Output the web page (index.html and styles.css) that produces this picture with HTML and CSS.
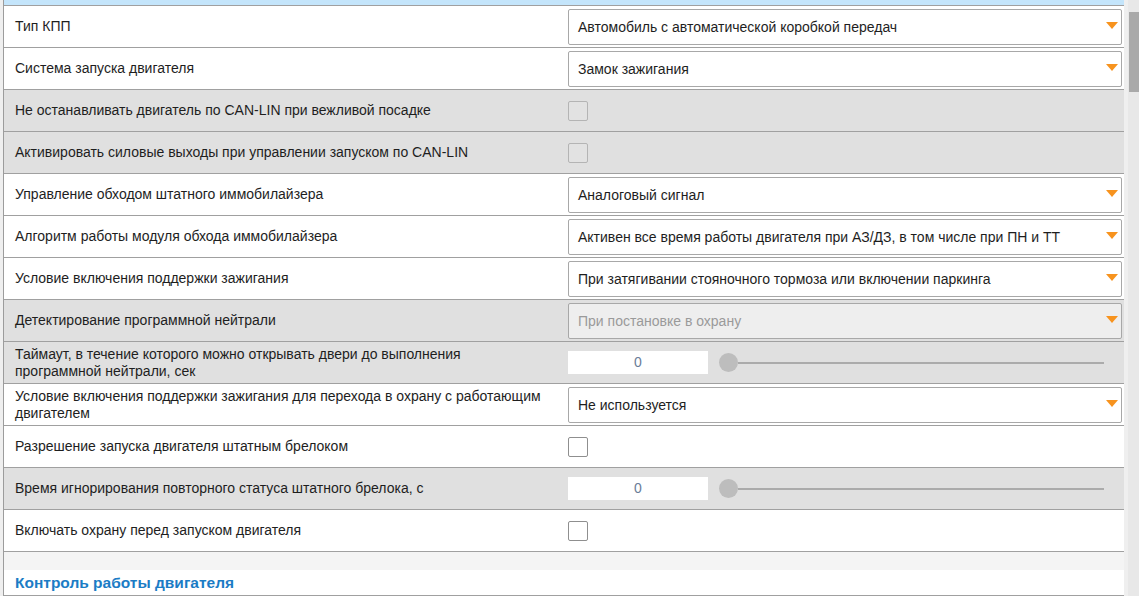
FILE: index.html
```html
<!DOCTYPE html>
<html lang="ru">
<head>
    <meta charset="UTF-8">
    <title>Настройки запуска</title>
    <link rel="stylesheet" href="styles.css">
</head>
<body>
    <div class="page">
        <div class="panel">
            <div class="topbar"></div>

            <div class="row">
                <div class="label">Тип КПП</div>
                <div class="ctrl"><div class="select"><span>Автомобиль с автоматической коробкой передач</span><i class="arrow"></i></div></div>
            </div>
            <div class="row">
                <div class="label">Система запуска двигателя</div>
                <div class="ctrl"><div class="select"><span>Замок зажигания</span><i class="arrow"></i></div></div>
            </div>
            <div class="row off">
                <div class="label">Не останавливать двигатель по CAN-LIN при вежливой посадке</div>
                <div class="ctrl"><div class="check"></div></div>
            </div>
            <div class="row off">
                <div class="label">Активировать силовые выходы при управлении запуском по CAN-LIN</div>
                <div class="ctrl"><div class="check"></div></div>
            </div>
            <div class="row">
                <div class="label">Управление обходом штатного иммобилайзера</div>
                <div class="ctrl"><div class="select"><span>Аналоговый сигнал</span><i class="arrow"></i></div></div>
            </div>
            <div class="row">
                <div class="label">Алгоритм работы модуля обхода иммобилайзера</div>
                <div class="ctrl"><div class="select"><span>Активен все время работы двигателя при АЗ/ДЗ, в том числе при ПН и ТТ</span><i class="arrow"></i></div></div>
            </div>
            <div class="row">
                <div class="label">Условие включения поддержки зажигания</div>
                <div class="ctrl"><div class="select"><span>При затягивании стояночного тормоза или включении паркинга</span><i class="arrow"></i></div></div>
            </div>
            <div class="row off">
                <div class="label">Детектирование программной нейтрали</div>
                <div class="ctrl"><div class="select disabled"><span>При постановке в охрану</span><i class="arrow"></i></div></div>
            </div>
            <div class="row off">
                <div class="label">Таймаут, в течение которого можно открывать двери до выполнения программной нейтрали, сек</div>
                <div class="ctrl">
                    <div class="num">0</div>
                    <div class="slider"><div class="thumb"></div><div class="track"></div></div>
                </div>
            </div>
            <div class="row">
                <div class="label">Условие включения поддержки зажигания для перехода в охрану с работающим двигателем</div>
                <div class="ctrl"><div class="select"><span>Не используется</span><i class="arrow"></i></div></div>
            </div>
            <div class="row">
                <div class="label">Разрешение запуска двигателя штатным брелоком</div>
                <div class="ctrl"><div class="check"></div></div>
            </div>
            <div class="row off">
                <div class="label">Время игнорирования повторного статуса штатного брелока, с</div>
                <div class="ctrl">
                    <div class="num">0</div>
                    <div class="slider"><div class="thumb"></div><div class="track"></div></div>
                </div>
            </div>
            <div class="row">
                <div class="label">Включать охрану перед запуском двигателя</div>
                <div class="ctrl"><div class="check"></div></div>
            </div>

            <div class="spacer"></div>
            <div class="section-title">Контроль работы двигателя</div>
        </div>
        <div class="scrollbar"><div class="scroll-thumb"></div></div>
    </div>
</body>
</html>
```

FILE: styles.css
```css
body {
    margin: 0;
    background: #efefef;
    font-family: "Liberation Sans", Arial, sans-serif;
    font-size: 14px;
    color: #1e1e1e;
}

.page {
    display: flex;
    height: 596px;
    overflow: hidden;
    padding-left: 3px;
}

.panel {
    width: 1121px;
    flex: none;
    box-sizing: border-box;
    border-left: 1px solid #9c9c9c;
    background: #fff;
}

.topbar {
    height: 5px;
    background: #c4e5fb;
    border-bottom: 1px solid #a0a0a0;
}

.row {
    display: grid;
    grid-template-columns: 564px 1fr;
    height: 41px;
    border-bottom: 1px solid #a0a0a0;
    background: #fff;
}

.row.off {
    background: #e0e0e0;
}

.label {
    display: flex;
    align-items: center;
    padding: 0 21px 0 11px;
    line-height: 17px;
}

.ctrl {
    display: flex;
    align-items: center;
    padding-right: 2px;
}

.select {
    flex: 1;
    height: 36px;
    box-sizing: border-box;
    display: flex;
    align-items: center;
    justify-content: space-between;
    padding: 0 3px 0 9px;
    background: #fff;
    border: 1px solid #a8a8a8;
    border-radius: 2px;
}

.select.disabled {
    background: #eeeeee;
    color: #9a9a9a;
}

.arrow {
    width: 0;
    height: 0;
    margin-top: -2px;
    border-left: 6px solid transparent;
    border-right: 6px solid transparent;
    border-top: 7px solid #f7931e;
}

.check {
    width: 20px;
    height: 20px;
    box-sizing: border-box;
    background: #fff;
    border: 1px solid #8f8f8f;
    border-radius: 2px;
}

.row.off .check {
    background: #e2e2e2;
    border-color: #b4b4b4;
}

.num {
    width: 140px;
    height: 23px;
    line-height: 23px;
    text-align: center;
    background: #fff;
    color: #6a7d98;
}

.slider {
    width: 385px;
    margin-left: 11px;
    display: flex;
    align-items: center;
}

.thumb {
    width: 19px;
    height: 19px;
    flex: none;
    border-radius: 50%;
    background: #bdbdbd;
}

.track {
    flex: 1;
    height: 2px;
    background: #ababab;
}

.spacer {
    height: 18px;
    background: #f4f4f4;
}

.section-title {
    height: 25px;
    line-height: 25px;
    padding-left: 11px;
    border-bottom: 1px solid #a0a0a0;
    font-size: 15.5px;
    font-weight: bold;
    color: #1b7cc5;
}

.scrollbar {
    width: 11px;
    margin-left: 4px;
    flex: none;
    background: #e8e8e8;
}

.scroll-thumb {
    margin: 12px 0 0 1px;
    height: 80px;
    background: #a9a9a9;
}
```
